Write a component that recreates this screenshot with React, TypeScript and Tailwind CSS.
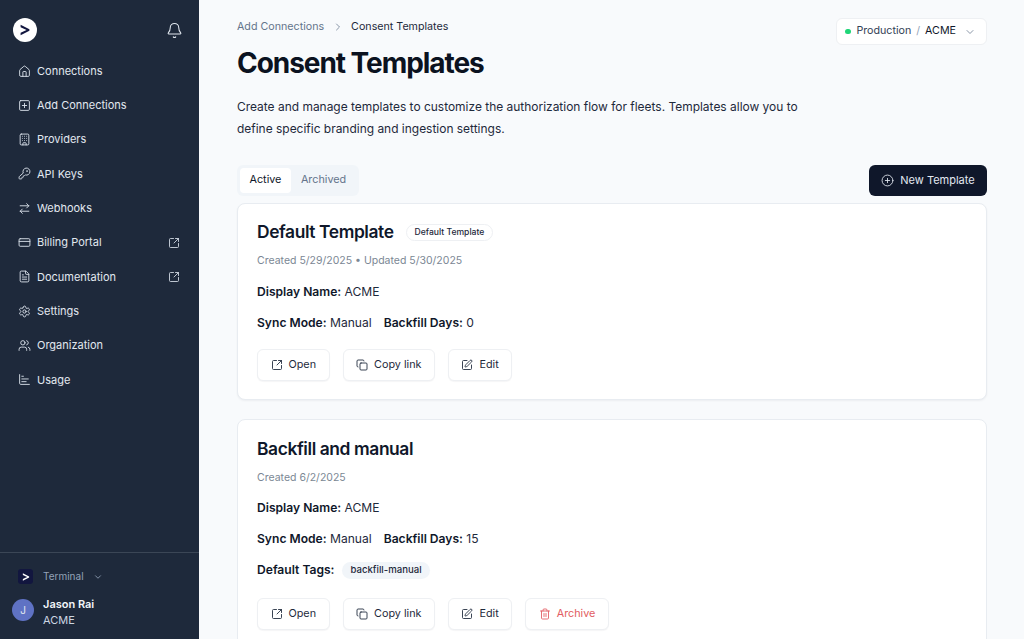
import React from 'react';
import {
  Home, SquarePlus, Building, KeyRound, ArrowRightLeft, CreditCard, FileText, Settings, Users, ChartBar,
  Bell, SquareArrowOutUpRight, ChevronRight, ChevronDown, CirclePlus, Copy, SquarePen, Trash2,
} from 'lucide-react';

const navItems = [
  { label: 'Connections', icon: Home },
  { label: 'Add Connections', icon: SquarePlus },
  { label: 'Providers', icon: Building },
  { label: 'API Keys', icon: KeyRound },
  { label: 'Webhooks', icon: ArrowRightLeft },
  { label: 'Billing Portal', icon: CreditCard, external: true },
  { label: 'Documentation', icon: FileText, external: true },
  { label: 'Settings', icon: Settings },
  { label: 'Organization', icon: Users },
  { label: 'Usage', icon: ChartBar },
];

function Logo() {
  return (
    <div className="w-6 h-6 rounded-full bg-white flex items-center justify-center">
      <svg width="14" height="14" viewBox="0 0 14 14" fill="none">
        <path d="M2.6 1.8 L11.4 6.2 V7.8 L2.6 12.2 V9.8 L8.6 7 L2.6 4.2 Z" fill="#12163f" />
      </svg>
    </div>
  );
}

function Sidebar() {
  return (
    <aside className="w-[199px] shrink-0 h-full bg-[#1e293b] flex flex-col">
      <div className="h-[59px] pl-[13px] pr-[16px] pt-[18px] flex items-start justify-between">
        <Logo />
        <Bell className="w-[17px] h-[17px] mt-[4px] text-[#e2e8f0]" strokeWidth={1.5} />
      </div>
      <nav className="flex flex-col gap-[10.33px] pl-[18px] pr-[19px]">
        {navItems.map((item) => (
          <div key={item.label} className="h-6 flex items-center text-[#e2e8f0]">
            <item.icon className="w-[13px] h-[13px] shrink-0 text-[#d5dce6]" strokeWidth={1.75} />
            <span className="ml-[6px] text-[11px]">{item.label}</span>
            {item.external && <SquareArrowOutUpRight className="ml-auto w-3 h-3 text-[#d5dce6]" strokeWidth={1.75} />}
          </div>
        ))}
      </nav>
      <div className="mt-auto h-[87px] border-t border-[#3b4656] pl-3 pt-4">
        <div className="flex items-center pl-[6px]">
          <div className="w-[15px] h-[15px] rounded-[3px] bg-[#12163f] flex items-center justify-center">
            <svg width="10" height="10" viewBox="0 0 14 14" fill="none">
              <path d="M2.6 1.8 L11.4 6.2 V7.8 L2.6 12.2 V9.8 L8.6 7 L2.6 4.2 Z" fill="#ffffff" />
            </svg>
          </div>
          <span className="ml-[10px] text-[10px] text-[#94a3b8]">Terminal</span>
          <ChevronDown className="ml-[9px] w-[10px] h-[10px] text-[#94a3b8]" strokeWidth={2} />
        </div>
        <div className="mt-3 flex items-start">
          <div className="mt-[3px] w-[22px] h-[22px] rounded-full bg-[#5f72c4] text-[#e2e8f0] text-[10px] flex items-center justify-center">J</div>
          <div className="ml-[9px] flex flex-col">
            <span className="text-[11px] leading-[16px] font-semibold text-[#f1f5f9]">Jason Rai</span>
            <span className="text-[11px] leading-[16px] text-[#cbd5e1]">ACME</span>
          </div>
        </div>
      </div>
    </aside>
  );
}

function ActionButton({ icon: Icon, label, danger }: { icon: React.ElementType; label: string; danger?: boolean }) {
  return (
    <button className={`h-8 px-[12.5px] flex items-center gap-[6px] bg-white border border-[#eef0f3] rounded-md shadow-[0_1px_1px_rgba(15,23,42,0.04)] text-[10.8px] ${danger ? 'text-[#e25c62]' : 'text-[#1e293b]'}`}>
      <Icon className="w-3 h-3" strokeWidth={1.75} />
      {label}
    </button>
  );
}

function Actions({ archive }: { archive?: boolean }) {
  return (
    <div className="flex gap-[13px]">
      <ActionButton icon={SquareArrowOutUpRight} label="Open" />
      <ActionButton icon={Copy} label="Copy link" />
      <ActionButton icon={SquarePen} label="Edit" />
      {archive && <ActionButton icon={Trash2} label="Archive" danger />}
    </div>
  );
}

function Field({ label, value }: { label: string; value: string }) {
  return (
    <span className="text-[12.1px] text-[#1e293b]">
      <span className="font-semibold text-[#0f172a]">{label}</span> {value}
    </span>
  );
}

export default function App() {
  return (
    <div className="h-[639px] w-[1024px] overflow-hidden flex bg-[#f8fafc] font-['Inter',sans-serif]">
      <Sidebar />
      <main className="flex-1 min-w-0 pl-[38px] pr-[37px]">
        <div className="flex justify-between items-start">
          <div>
            <div className="pt-[20px] flex items-center text-[10.7px] leading-[14px]">
              <span className="text-[#64748b]">Add Connections</span>
              <ChevronRight className="mx-[7.5px] w-3 h-3 text-[#64748b]" strokeWidth={1.5} />
              <span className="text-[#1e293b]">Consent Templates</span>
            </div>
            <h1 className="mt-[10px] text-[28px] leading-[38px] font-bold tracking-[-1.05px] text-[#0b1220]">Consent Templates</h1>
          </div>
          <div className="mt-[18px] h-[27px] pl-[8px] pr-[10px] flex items-center bg-white border border-[#eef0f3] rounded-md text-[10.7px]">
            <span className="w-[5.5px] h-[5.5px] rounded-full bg-[#1fd678]" />
            <span className="ml-[5.5px] text-[#334155]">Production</span>
            <span className="mx-[5px] text-[#94a3b8]">/</span>
            <span className="text-[#0f172a]">ACME</span>
            <ChevronDown className="ml-[8px] w-3 h-3 text-[#64748b]" strokeWidth={1.5} />
          </div>
        </div>
        <p className="mt-[14px] w-[570px] text-[11.96px] leading-[22px] text-[#1e293b]">
          Create and manage templates to customize the authorization flow for fleets. Templates allow you to define specific branding and ingestion settings.
        </p>
        <div className="mt-[25px] flex items-center justify-between">
          <div className="h-[31px] p-[3px] bg-[#f1f5f9] rounded-md flex text-[10.8px]">
            <span className="px-[9.5px] flex items-center bg-white rounded-[4px] text-[#0f172a]">Active</span>
            <span className="px-[10px] flex items-center text-[#64748b]">Archived</span>
          </div>
          <button className="h-[31px] w-[118px] flex items-center justify-center gap-[6px] bg-[#0f172a] rounded-md text-[11px] text-[#e2e8f0]">
            <CirclePlus className="w-[13px] h-[13px]" strokeWidth={1.6} />
            New Template
          </button>
        </div>
        <section className="mt-[7px] h-[197px] px-[19px] pt-[16px] bg-white border border-[#e8ecf1] rounded-lg shadow-[0_1px_2px_rgba(15,23,42,0.05)]">
          <div className="flex items-center gap-[12px]">
            <h2 className="text-[17.4px] leading-[24px] font-semibold tracking-[-0.4px] text-[#0f172a]">Default Template</h2>
            <span className="h-[17px] px-[8px] flex items-center rounded-full border border-[#eef0f3] text-[8.6px] font-medium text-[#1e293b]">Default Template</span>
          </div>
          <div className="mt-[10px] text-[10.5px] leading-[14px] text-[#7b8794]">Created 5/29/2025 • Updated 5/30/2025</div>
          <div className="mt-[14px] leading-[16px]"><Field label="Display Name:" value="ACME" /></div>
          <div className="mt-[15px] leading-[16px] flex gap-[12px]">
            <Field label="Sync Mode:" value="Manual" />
            <Field label="Backfill Days:" value="0" />
          </div>
          <div className="mt-[18px]"><Actions /></div>
        </section>
        <section className="mt-[19px] h-[260px] px-[19px] pt-[17px] bg-white border border-[#e8ecf1] rounded-lg">
          <h2 className="text-[17.4px] leading-[24px] font-semibold tracking-[-0.4px] text-[#0f172a]">Backfill and manual</h2>
          <div className="mt-[10px] text-[10.5px] leading-[14px] text-[#7b8794]">Created 6/2/2025</div>
          <div className="mt-[13px] leading-[16px]"><Field label="Display Name:" value="ACME" /></div>
          <div className="mt-[15px] leading-[16px] flex gap-[12px]">
            <Field label="Sync Mode:" value="Manual" />
            <Field label="Backfill Days:" value="15" />
          </div>
          <div className="mt-[14px] h-[18px] flex items-center gap-[8px]">
            <span className="text-[12.1px] font-semibold text-[#0f172a]">Default Tags:</span>
            <span className="h-[17px] px-[8px] flex items-center rounded-full bg-[#f1f5f9] text-[9.6px] font-medium text-[#1e293b]">backfill-manual</span>
          </div>
          <div className="mt-[19px]"><Actions archive /></div>
        </section>
      </main>
    </div>
  );
}
